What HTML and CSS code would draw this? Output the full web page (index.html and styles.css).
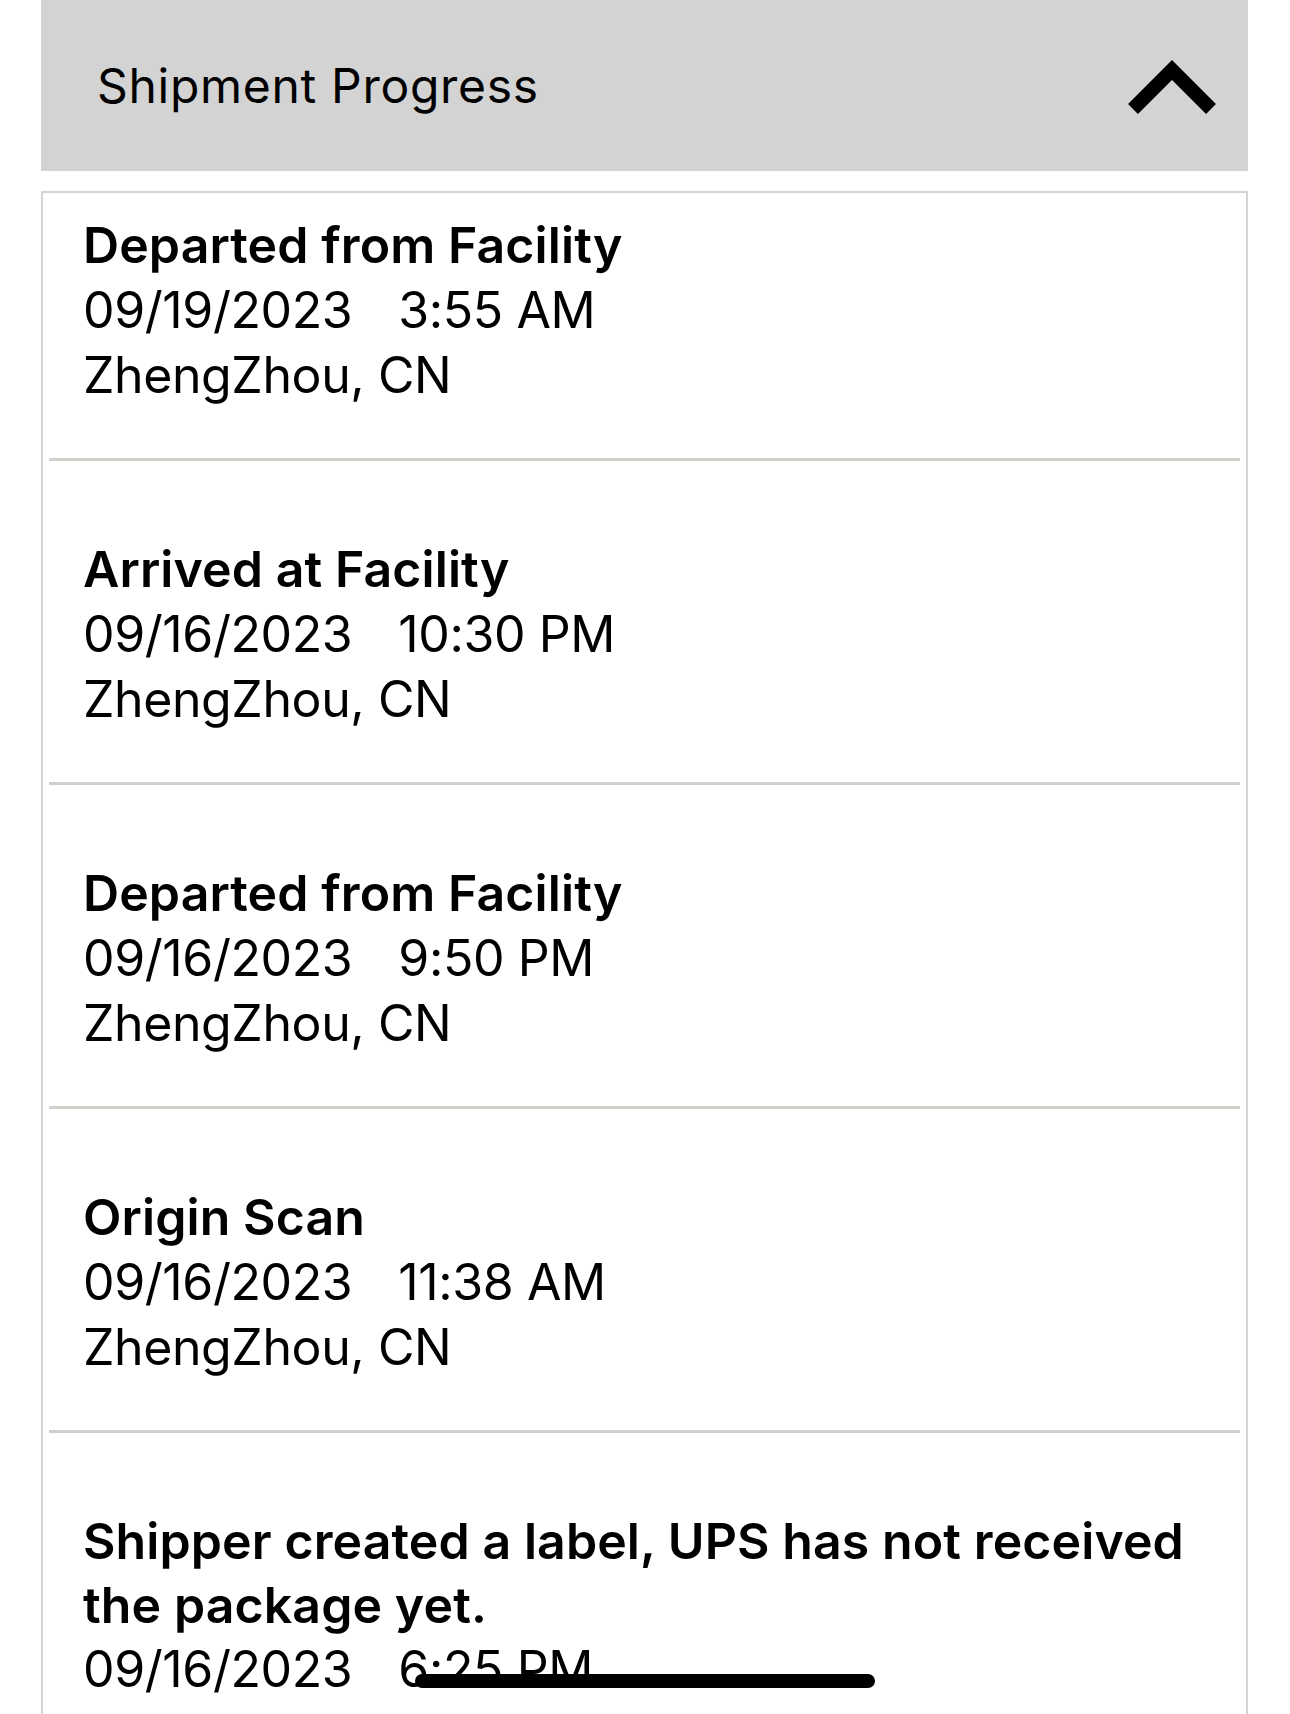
FILE: index.html
```html
<!DOCTYPE html>
<html lang="en">
<head>
<meta charset="utf-8">
<title>Shipment Progress</title>
<link rel="stylesheet" href="styles.css">
</head>
<body>
<div class="page">
  <header class="panel-head">
    <span class="panel-title">Shipment Progress</span>
    <svg class="chevron" width="90" height="60" viewBox="0 0 90 60" aria-hidden="true">
      <polyline points="6,52 45,13 84,52" fill="none" stroke="#000" stroke-width="14" stroke-linejoin="miter" stroke-linecap="butt"/>
    </svg>
  </header>
  <section class="card">
    <div class="event first">
      <div class="ev-title">Departed from Facility</div>
      <div class="ev-line"><span class="date">09/19/2023</span><span>3:55 AM</span></div>
      <div class="ev-line">ZhengZhou, CN</div>
    </div>
    <div class="sep"></div>
    <div class="event">
      <div class="ev-title">Arrived at Facility</div>
      <div class="ev-line"><span class="date">09/16/2023</span><span>10:30 PM</span></div>
      <div class="ev-line">ZhengZhou, CN</div>
    </div>
    <div class="sep"></div>
    <div class="event">
      <div class="ev-title">Departed from Facility</div>
      <div class="ev-line"><span class="date">09/16/2023</span><span>9:50 PM</span></div>
      <div class="ev-line">ZhengZhou, CN</div>
    </div>
    <div class="sep"></div>
    <div class="event">
      <div class="ev-title">Origin Scan</div>
      <div class="ev-line"><span class="date">09/16/2023</span><span>11:38 AM</span></div>
      <div class="ev-line">ZhengZhou, CN</div>
    </div>
    <div class="sep"></div>
    <div class="event">
      <div class="ev-title wrap">Shipper created a label, UPS has not received the package yet.</div>
      <div class="ev-line"><span class="date">09/16/2023</span><span>6:25 PM</span></div>
    </div>
  </section>
</div>
<div class="home-indicator"></div>
</body>
</html>
```

FILE: styles.css
```css
html, body {
  margin: 0;
  padding: 0;
  background: #ffffff;
}
body {
  font-family: Inter, "Liberation Sans", sans-serif;
  color: #000;
  height: 1714px;
  overflow: hidden;
}
.page {
  margin: 0 42px 0 41px;
}
.panel-head {
  background: #d3d3d3;
  height: 171px;
  display: flex;
  align-items: center;
  justify-content: space-between;
  padding: 0 31px 0 56px;
  box-sizing: border-box;
}
.panel-title {
  font-size: 48px;
  font-weight: 400;
  letter-spacing: 0.7px;
}
.chevron {
  display: block;
  margin-top: 2px;
}
.card {
  margin-top: 20px;
  border: 2px solid #d4d4d4;
  padding: 0 6px;
}
.event {
  padding: 76px 0 50px 34px;
}
.event.first {
  padding-top: 20px;
}
.ev-title {
  font-size: 50px;
  font-weight: 600;
  line-height: 65px;
  letter-spacing: 0.1px;
}
.ev-title.wrap {
  max-width: 1110px;
  line-height: 64px;
}
.ev-line {
  font-size: 50px;
  font-weight: 400;
  line-height: 65px;
  letter-spacing: -0.4px;
}
.date {
  margin-right: 46px;
}
.sep {
  height: 3px;
  background: #d2cfcb;
}
.home-indicator {
  position: fixed;
  left: 415px;
  top: 1674px;
  width: 460px;
  height: 14px;
  border-radius: 7px;
  background: #000;
}
```
